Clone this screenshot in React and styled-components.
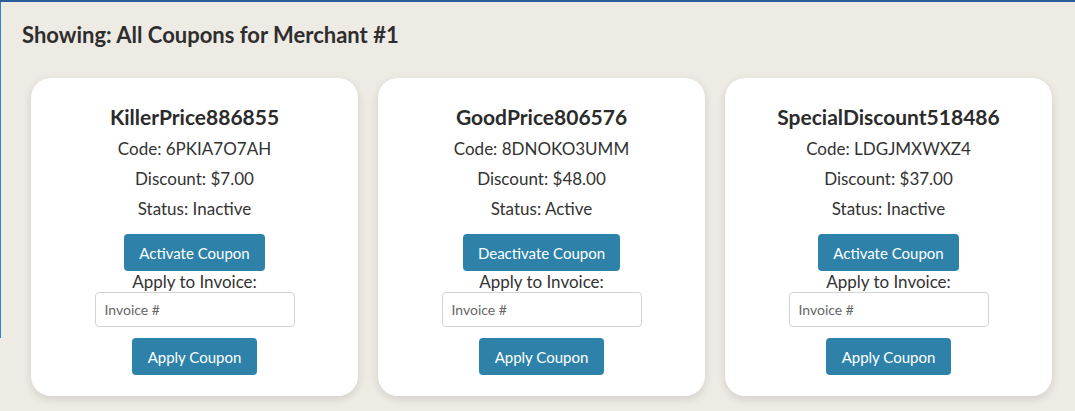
import React from 'react';
import styled, { createGlobalStyle } from 'styled-components';

const GlobalStyle = createGlobalStyle`
  html, body {
    margin: 0;
    padding: 0;
    background: #eeebe4;
    font-family: "Lato", "Open Sans", sans-serif;
    color: #2b2b2b;
  }
`;

const Page = styled.div`
  width: 1075px;
  height: 411px;
  overflow: hidden;
  border-top: 2px solid #2c5c9c;
  box-sizing: border-box;
  position: relative;
`;

const SideLine = styled.div`
  position: absolute;
  left: 0;
  top: 0;
  width: 1px;
  height: 336px;
  background: #2f86bb;
`;

const Main = styled.main`
  padding: 21px 0 0 22px;
`;

const Heading = styled.h2`
  margin: 0 0 31px 0;
  font-size: 22px;
  font-weight: 700;
  color: #2e2e2e;
  line-height: 24px;
`;

const Grid = styled.div`
  display: flex;
  gap: 20px;
  padding-left: 9px;
`;

const Card = styled.div`
  width: 327px;
  height: 318px;
  box-sizing: border-box;
  background: #fff;
  border-radius: 20px;
  box-shadow: 0 3px 8px rgba(0, 0, 0, 0.12);
  display: flex;
  flex-direction: column;
  align-items: center;
  padding-top: 26px;
`;

const Title = styled.h3`
  margin: 0 0 4px 0;
  font-size: 21px;
  font-weight: 700;
  line-height: 26px;
  color: #2b2b2b;
`;

const Line = styled.p`
  margin: 0;
  font-size: 17px;
  line-height: 30px;
  color: #333;
`;

const Button = styled.button`
  font-family: inherit;
  font-size: 15px;
  color: #fff;
  background: #2e82aa;
  border: none;
  border-radius: 4px;
  height: 37px;
  padding: 0 ${(p) => p.$pad}px;
  cursor: pointer;
  margin-top: ${(p) => p.$top}px;
`;

const Label = styled.label`
  font-size: 17px;
  line-height: 21px;
  color: #333;
`;

const Input = styled.input`
  width: 200px;
  height: 35px;
  box-sizing: border-box;
  border: 1px solid #d3d3d3;
  border-radius: 4px;
  padding: 0 9px;
  font-family: inherit;
  font-size: 14px;
  &::placeholder {
    color: #666;
  }
`;

const coupons = [
  { name: 'KillerPrice886855', code: '6PKIA7O7AH', discount: '$7.00', status: 'Inactive' },
  { name: 'GoodPrice806576', code: '8DNOKO3UMM', discount: '$48.00', status: 'Active' },
  { name: 'SpecialDiscount518486', code: 'LDGJMXWXZ4', discount: '$37.00', status: 'Inactive' },
];

const CouponCard = ({ c }) => (
  <Card>
    <Title>{c.name}</Title>
    <Line>Code: {c.code}</Line>
    <Line>Discount: {c.discount}</Line>
    <Line>Status: {c.status}</Line>
    <Button $pad={15} $top={10}>
      {c.status === 'Active' ? 'Deactivate Coupon' : 'Activate Coupon'}
    </Button>
    <Label>Apply to Invoice:</Label>
    <Input placeholder="Invoice #" />
    <Button $pad={16} $top={11}>Apply Coupon</Button>
  </Card>
);

export default function App() {
  return (
    <>
      <GlobalStyle />
      <Page>
        <SideLine />
        <Main>
          <Heading>Showing: All Coupons for Merchant #1</Heading>
          <Grid>
            {coupons.map((c) => (
              <CouponCard key={c.name} c={c} />
            ))}
          </Grid>
        </Main>
      </Page>
    </>
  );
}
